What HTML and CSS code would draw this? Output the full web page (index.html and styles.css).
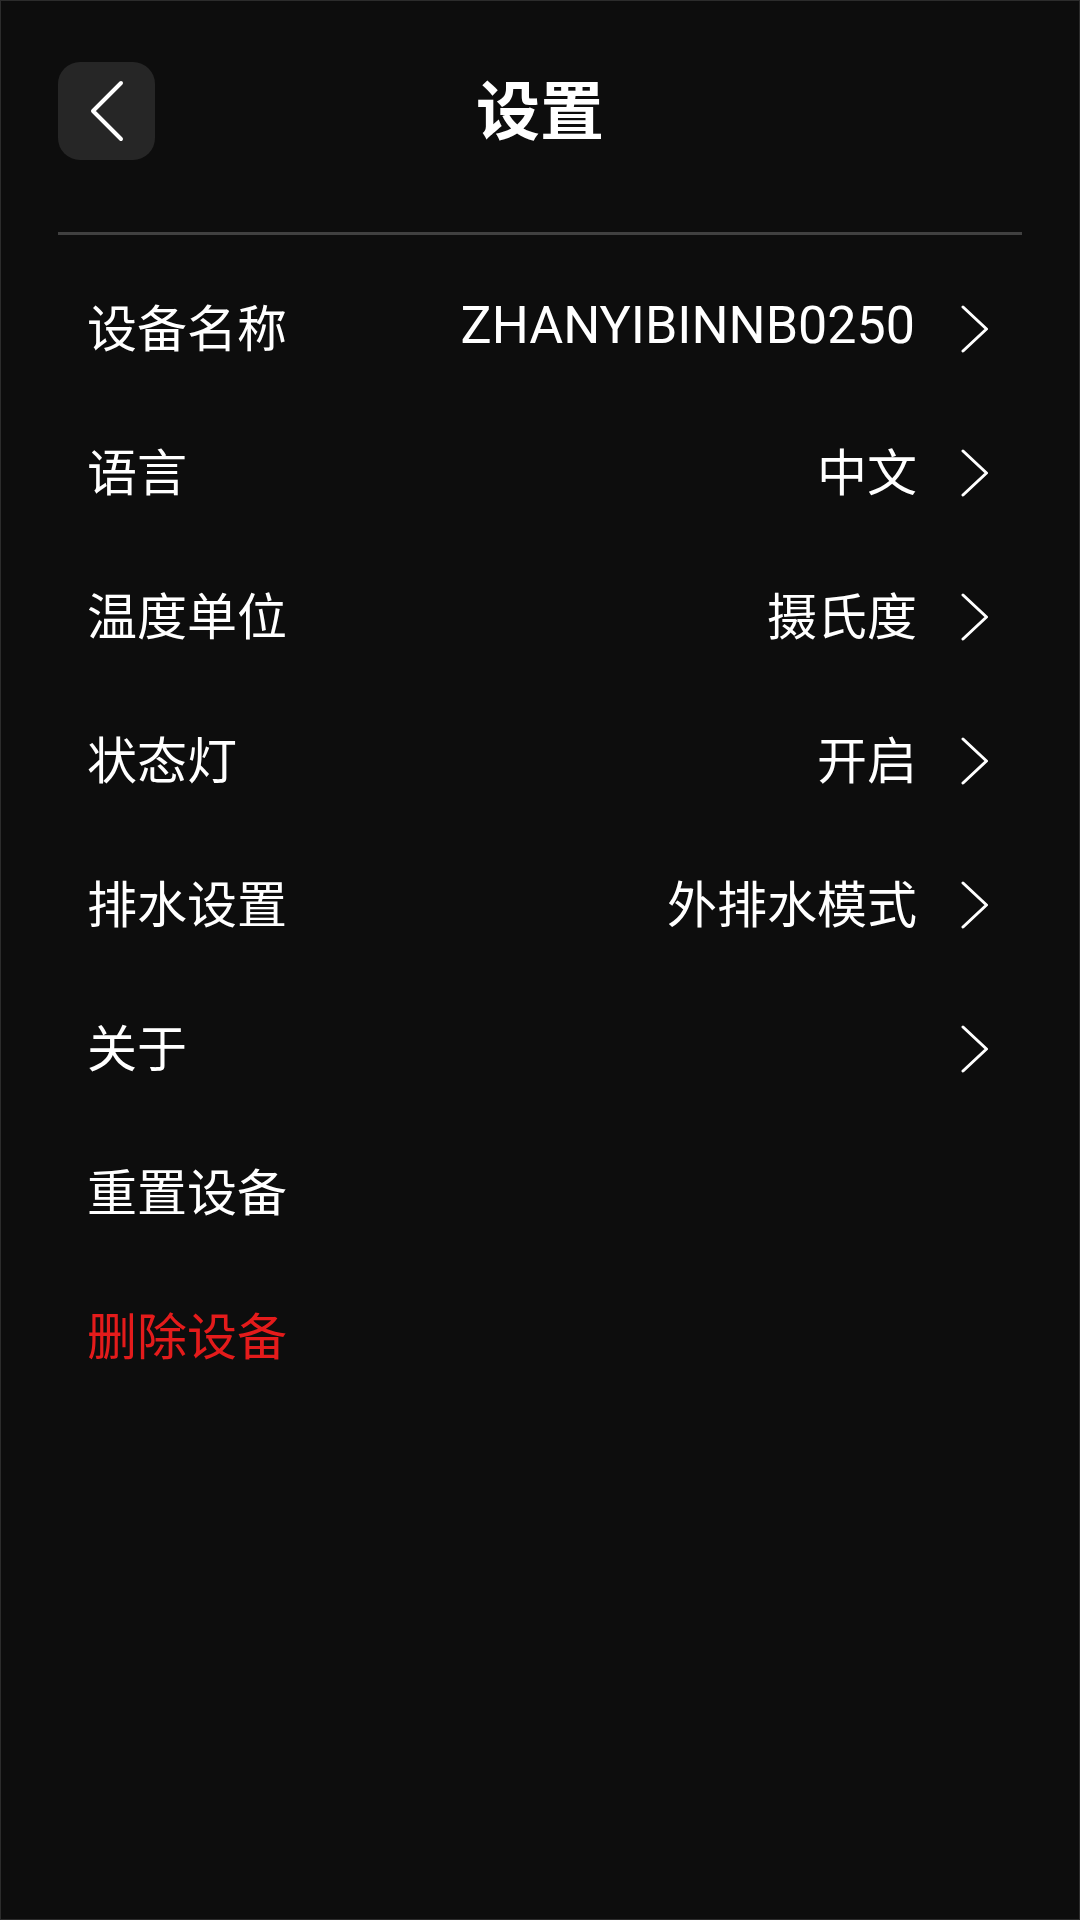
FILE: index.html
```html
<!DOCTYPE html>
<html lang="zh-CN">
<head>
<meta charset="utf-8">
<title>设置</title>
<link rel="stylesheet" href="styles.css">
</head>
<body>
<div class="page">
  <header class="header">
    <button class="back" aria-label="返回">
      <svg width="36" height="64" viewBox="0 0 36 64"><path d="M32 4 L4 32 L32 60" fill="none" stroke="#fff" stroke-width="4" stroke-linecap="round" stroke-linejoin="round"/></svg>
    </button>
    <h1 class="title">设置</h1>
    <span class="spacer"></span>
  </header>
  <div class="divider"></div>
  <ul class="list">
    <li class="row">
      <span class="label">设备名称</span>
      <span class="value latin">ZHANYIBINNB0250</span>
      <svg class="chev" width="28" height="48" viewBox="0 0 28 48"><path d="M2 2 L25.5 24 L2 46" fill="none" stroke="#fff" stroke-width="3" stroke-linecap="round" stroke-linejoin="round"/></svg>
    </li>
    <li class="row">
      <span class="label">语言</span>
      <span class="value">中文</span>
      <svg class="chev" width="28" height="48" viewBox="0 0 28 48"><path d="M2 2 L25.5 24 L2 46" fill="none" stroke="#fff" stroke-width="3" stroke-linecap="round" stroke-linejoin="round"/></svg>
    </li>
    <li class="row">
      <span class="label">温度单位</span>
      <span class="value">摄氏度</span>
      <svg class="chev" width="28" height="48" viewBox="0 0 28 48"><path d="M2 2 L25.5 24 L2 46" fill="none" stroke="#fff" stroke-width="3" stroke-linecap="round" stroke-linejoin="round"/></svg>
    </li>
    <li class="row">
      <span class="label">状态灯</span>
      <span class="value">开启</span>
      <svg class="chev" width="28" height="48" viewBox="0 0 28 48"><path d="M2 2 L25.5 24 L2 46" fill="none" stroke="#fff" stroke-width="3" stroke-linecap="round" stroke-linejoin="round"/></svg>
    </li>
    <li class="row">
      <span class="label">排水设置</span>
      <span class="value">外排水模式</span>
      <svg class="chev" width="28" height="48" viewBox="0 0 28 48"><path d="M2 2 L25.5 24 L2 46" fill="none" stroke="#fff" stroke-width="3" stroke-linecap="round" stroke-linejoin="round"/></svg>
    </li>
    <li class="row">
      <span class="label">关于</span>
      <svg class="chev" width="28" height="48" viewBox="0 0 28 48"><path d="M2 2 L25.5 24 L2 46" fill="none" stroke="#fff" stroke-width="3" stroke-linecap="round" stroke-linejoin="round"/></svg>
    </li>
    <li class="row">
      <span class="label">重置设备</span>
    </li>
    <li class="row">
      <span class="label danger">删除设备</span>
    </li>
  </ul>
</div>
</body>
</html>
```
FILE: styles.css
```css
* {
  box-sizing: border-box;
}
html, body {
  margin: 0;
  padding: 0;
  background: #0d0d0d;
}
.page {
  width: 1080px;
  height: 1920px;
  background: #0d0d0d;
  border: 1px solid #2c2c2c;
  padding: 61px 57px 0 57px;
  font-family: "Noto Sans CJK SC", "Noto Sans", sans-serif;
  color: #ffffff;
}
.header {
  display: grid;
  grid-template-columns: 97px 1fr 97px;
  align-items: center;
  height: 98px;
}
.back {
  width: 97px;
  height: 98px;
  border: none;
  border-radius: 22px;
  background: #262626;
  padding: 0;
  display: flex;
  align-items: center;
  justify-content: center;
}
.back svg {
  display: block;
}
.title {
  margin: 0;
  padding-bottom: 10px;
  text-align: center;
  font-size: 64px;
  font-weight: 700;
  line-height: 1;
  color: #ffffff;
}
.divider {
  margin-top: 72px;
  height: 3px;
  background: #404040;
}
.list {
  list-style: none;
  margin: 22px 0 0 0;
  padding: 0;
}
.row {
  display: flex;
  align-items: center;
  height: 144px;
  padding: 0 33px 0 29px;
}
.label {
  flex: 1;
  font-size: 50px;
  line-height: 1;
  padding-bottom: 8px;
  color: #ffffff;
}
.value {
  font-size: 50px;
  line-height: 1;
  padding-bottom: 8px;
  margin-right: 44px;
  color: #ffffff;
}
.value.latin {
  font-family: Roboto, "Noto Sans", sans-serif;
  font-size: 52px;
  padding-bottom: 6px;
  margin-right: 46px;
}
.chev {
  display: block;
  flex: none;
}
.danger {
  color: #e41b1b;
}
```
